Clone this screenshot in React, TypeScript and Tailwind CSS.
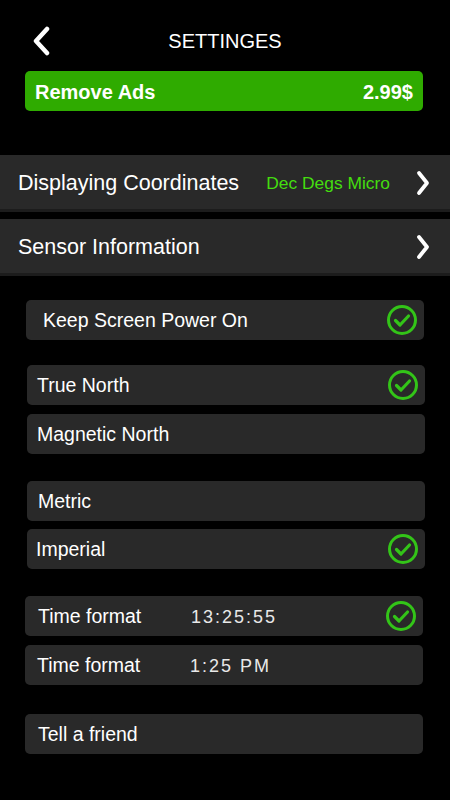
import React from 'react';

const Check = () => (
    <svg width="32" height="32" viewBox="0 0 32 32" fill="none">
        <circle cx="16" cy="16" r="13.5" stroke="#33c418" strokeWidth="3" />
        <path d="M9.5 16.5 L14 21 L22.5 12" stroke="#33c418" strokeWidth="3.2" strokeLinecap="round" strokeLinejoin="round" />
    </svg>
);

const Chevron = ({ left = false }: { left?: boolean }) => (
    <svg width="18" height="30" viewBox="0 0 18 30" fill="none">
        <path
            d={left ? "M15 3 L4 15 L15 27" : "M5 5 L13 15 L5 25"}
            stroke="white"
            strokeWidth={left ? 4.5 : 3.8}
            strokeLinecap="round"
            strokeLinejoin="round"
        />
    </svg>
);

function Row({ label, value, checked, className, pad }: any) {
    return (
        <div className={`h-[40px] w-[398px] rounded-[5px] bg-[#292929] flex items-center pr-[6px] ${className}`}>
            <div className={`flex-1 flex items-center pt-[2px] ${pad}`}>
                {value ? (
                    <>
                        <span className="w-[153px] text-[19.5px]">{label}</span>
                        <span className="text-[18px] tracking-[2px] text-[#e8e8e8]">{value}</span>
                    </>
                ) : (
                    <span className="text-[19.5px]">{label}</span>
                )}
            </div>
            {checked && <Check />}
        </div>
    );
}

export default function App() {
    return (
        <div className="w-[450px] h-[800px] bg-black text-white overflow-hidden font-['Liberation_Sans',Arial,sans-serif]">
            {/* header */}
            <div className="pt-[26px] grid grid-cols-[1fr_auto_1fr] items-center h-[56px]">
                <div className="pl-[32px] flex items-center"><Chevron left /></div>
                <h1 className="text-[20px] leading-none">SETTINGES</h1>
                <div />
            </div>

            <div className="mt-[15px] ml-[25px] w-[398px] h-[40px] rounded-[5px] bg-[#2fab00] flex items-center justify-between px-[10px] pt-[1px] font-bold text-[20px]">
                <span>Remove Ads</span>
                <span>2.99$</span>
            </div>

            <div className="mt-[44px] h-[57px] bg-[#292929] border-b-[3px] border-[#1c1c1c] flex items-center pl-[18px] pr-[18px] pt-[2px]">
                <span className="text-[21.5px] flex-1">Displaying Coordinates</span>
                <span className="text-[17.4px] text-[#44dd0f] mr-[24px]">Dec Degs Micro</span>
                <Chevron />
            </div>
            <div className="mt-[7px] h-[57px] bg-[#292929] border-b-[3px] border-[#1c1c1c] flex items-center pl-[18px] pr-[18px] pt-[2px]">
                <span className="text-[21.5px] flex-1">Sensor Information</span>
                <Chevron />
            </div>

            <Row label="Keep Screen Power On" checked className="mt-[24px] ml-[26px]" pad="pl-[17px]" />

            <Row label="True North" checked className="mt-[25px] ml-[27px]" pad="pl-[10px]" />
            <Row label="Magnetic North" className="mt-[9px] ml-[27px]" pad="pl-[10px]" />

            <Row label="Metric" className="mt-[27px] ml-[27px]" pad="pl-[11px]" />
            <Row label="Imperial" checked className="mt-[8px] ml-[27px]" pad="pl-[9px]" />

            <Row label="Time format" value="13:25:55" checked className="mt-[27px] ml-[25px]" pad="pl-[13px]" />
            <Row label="Time format" value="1:25  PM" className="mt-[9px] ml-[25px]" pad="pl-[12px]" />

            <Row label="Tell a friend" className="mt-[29px] ml-[25px]" pad="pl-[13px]" />
        </div>
    );
}
